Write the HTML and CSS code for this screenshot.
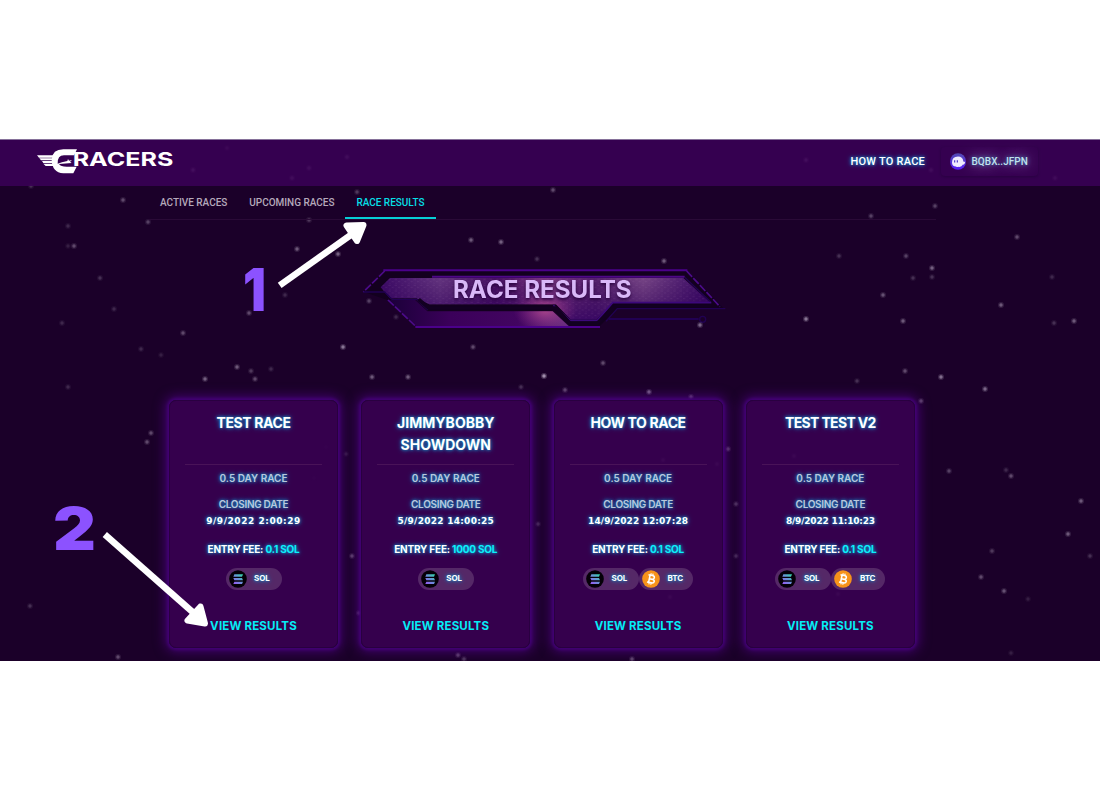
FILE: index.html
```
<!DOCTYPE html>
<html lang="en">
<head>
<meta charset="utf-8">
<title>CRacers - Race Results</title>
<link rel="stylesheet" href="styles.css">
</head>
<body>
<svg class="defs" width="0" height="0" aria-hidden="true">
  <defs>
    <linearGradient id="solg" x1="0" y1="1" x2="1" y2="0"><stop offset="0" stop-color="#9b55f5"/><stop offset=".5" stop-color="#6a8fd8"/><stop offset="1" stop-color="#2fd9a6"/></linearGradient>
    <symbol id="sol" viewBox="0 0 54 54">
      <circle cx="27" cy="27" r="26.5" fill="#050008"/>
      <path fill="url(#solg)" d="M16 13H42L39 20H13ZM13 24H39L42 31H16ZM16 35H42L39 42H13Z"/>
    </symbol>
    <symbol id="btc" viewBox="0 0 54 54">
      <circle cx="27" cy="27" r="26.5" fill="#f7931a"/>
      <g transform="rotate(12 27 27)" fill="none" stroke="#fff" stroke-width="4.6">
        <path d="M17 16H29Q36 16 36 21.500Q36 27 29 27H22M22 27H30Q38 27 38 32.500Q38 38 30 38H17M22 16V38"/>
        <path stroke-width="3.500" d="M24 10V16M30 10V16M24 38V44M30 38V44"/>
      </g>
    </symbol>
  </defs>
</svg>
<main class="app">
  <svg class="stars" viewBox="0 139 1100 522" aria-hidden="true"><g id="starfield"></g></svg>
  <header class="header">
    <svg class="logo" viewBox="105 50 420 84" role="img" aria-label="CRacers">
      <g fill="#fff">
        <path d="M111 75H166L160 82H117ZM118 84H158L156 90H123ZM126 92H156L158 98H130ZM130 100H160L166 107H137Z"/>
        <path d="M231 57H190Q157 57 155 88Q156 126 190 129H220L230 109H200Q182 109 177 101L215 98L210 94L216 89L207 91L204 86L202 92Q184 95 173 100Q172 75 192 75H222Z"/>
        <text class="logo-word" x="218" y="108" textLength="302" lengthAdjust="spacingAndGlyphs">RACERS</text>
      </g>
    </svg>
    <nav class="header-nav">
      <a class="how">HOW TO RACE</a>
      <div class="wallet">
        <svg viewBox="0 0 48 50" aria-hidden="true"><defs><linearGradient id="ph" x2="0" y2="1"><stop stop-color="#534bb1"/><stop offset="1" stop-color="#551bf9"/></linearGradient></defs>
          <ellipse cx="24" cy="25" rx="24" ry="25" fill="url(#ph)"/>
          <path fill="#f1ecff" d="M6 28Q6 10 24 10Q38 10 40 24Q42 28 45 25Q46 34 38 35Q35 42 26 41Q21 43 18 40Q6 40 6 28Z"/>
          <path stroke="#4b36c9" stroke-width="3.500" d="M14 21V28M22 21V28"/></svg>
        <span>BQBX..JFPN</span>
      </div>
    </nav>
  </header>
  <nav class="tabs">
    <a class="tab">ACTIVE RACES</a>
    <a class="tab">UPCOMING RACES</a>
    <a class="tab tab-active">RACE RESULTS</a>
  </nav>
  <svg class="banner" viewBox="0 0 1170 270">
    <defs>
      <linearGradient id="plate"><stop offset="0" stop-color="#3c0a66"/><stop offset=".18" stop-color="#63347f"/><stop offset=".35" stop-color="#461062"/><stop offset=".5" stop-color="#7a3680"/><stop offset=".65" stop-color="#54206d"/><stop offset=".8" stop-color="#754485"/><stop offset="1" stop-color="#350563"/></linearGradient>
      <linearGradient id="under"><stop offset="0" stop-color="#1a0038"/><stop offset=".35" stop-color="#3b005a"/><stop offset=".72" stop-color="#420560"/><stop offset="1" stop-color="#68307f"/></linearGradient>
      <linearGradient id="shade" x2="0" y2="1"><stop stop-color="#300050" stop-opacity="0"/><stop offset="1" stop-color="#300060" stop-opacity=".75"/></linearGradient>
      <radialGradient id="flare"><stop stop-color="#e0609c" stop-opacity=".6"/><stop offset="1" stop-color="#b23c9a" stop-opacity="0"/></radialGradient>
      <pattern id="grain" width="19" height="17" patternUnits="userSpaceOnUse"><path d="M1 4H8M11 10H17M4 15H7" stroke="#b383bd" stroke-opacity=".17" stroke-width="2"/></pattern>
      <clipPath id="panes"><path d="M120 84H1000L1080 157H790L740 208H662L618 163H238L200 145H120L92 112Z"/></clipPath>
      <clipPath id="both"><path d="M120 84H1000L1080 157H790L740 208H662L618 163H238L200 145H120L92 112ZM110 150H195L232 184H608L656 228H198Z"/></clipPath>
    </defs>
    <path fill="#13001f" d="M104 60H1010L1122 176H800L750 228H660L612 184H232L200 150H112L40 125Z"/>
    <path fill="url(#plate)" d="M120 84H1000L1080 157H790L740 208H662L618 163H238L200 145H120L92 112Z"/>
    <path fill="url(#shade)" d="M120 84H1000L1080 157H790L740 208H662L618 163H238L200 145H120L92 112Z"/>
    <path fill="url(#under)" d="M110 150H195L232 184H608L656 228H198Z"/>
    <path clip-path="url(#panes)" fill="url(#grain)" d="M80 80H1090V215H80Z"/>
    <ellipse clip-path="url(#both)" cx="585" cy="180" rx="95" ry="65" fill="url(#flare)"/>
    <g fill="none" stroke-width="6">
      <path stroke="#4b008b" d="M100 61H1012"/><path stroke="#4e0787" d="M246 80H1004"/>
      <path stroke="#4c0b89" stroke-width="5" stroke-dasharray="24 5" d="M104 63L40 126M1010 63L1110 170M114 150L196 228"/>
      <path stroke="#210052" stroke-width="4" d="M40 126H104L126 148H200L234 180M1004 82L1082 156M1126 176H802L768 214"/>
      <path stroke="#3c087b" stroke-width="5" d="M610 166L660 211H742L788 158H1084"/>
      <path stroke="#120021" stroke-width="11" d="M206 148L236 174H618L660 220H742L794 168H1080"/>
      <path stroke="#4b008b" d="M196 231H750"/><path stroke="#210052" d="M776 207H1046"/><circle cx="1058" cy="208" r="9" stroke="#210052" stroke-width="4"/>
    </g>
    <text class="banner-text" x="309" y="145" textLength="536" lengthAdjust="spacingAndGlyphs">RACE RESULTS</text>
  </svg>
  <section class="cards">
    <article class="card">
      <h2 class="title">TEST RACE</h2>
      <p class="duration">0.5 DAY RACE</p>
      <p class="label">CLOSING DATE</p>
      <p class="date">9/9/2022 2:00:29</p>
      <p class="fee">ENTRY FEE: <b>0.1 SOL</b></p>
      <div class="chips"><span class="chip"><svg><use href="#sol"/></svg><i>SOL</i></span></div>
      <a class="view">VIEW RESULTS</a>
    </article>
    <article class="card">
      <h2 class="title title-long">JIMMYBOBBY<br>SHOWDOWN</h2>
      <p class="duration">0.5 DAY RACE</p>
      <p class="label">CLOSING DATE</p>
      <p class="date date-mid">5/9/2022 14:00:25</p>
      <p class="fee">ENTRY FEE: <b>1000 SOL</b></p>
      <div class="chips"><span class="chip"><svg><use href="#sol"/></svg><i>SOL</i></span></div>
      <a class="view">VIEW RESULTS</a>
    </article>
    <article class="card">
      <h2 class="title">HOW TO RACE</h2>
      <p class="duration">0.5 DAY RACE</p>
      <p class="label">CLOSING DATE</p>
      <p class="date date-snug">14/9/2022 12:07:28</p>
      <p class="fee">ENTRY FEE: <b>0.1 SOL</b></p>
      <div class="chips"><span class="chip"><svg><use href="#sol"/></svg><i>SOL</i></span><span class="chip chip-btc"><svg><use href="#btc"/></svg><i>BTC</i></span></div>
      <a class="view">VIEW RESULTS</a>
    </article>
    <article class="card">
      <h2 class="title title-tight">TEST TEST V2</h2>
      <p class="duration">0.5 DAY RACE</p>
      <p class="label">CLOSING DATE</p>
      <p class="date date-tight">8/9/2022 11:10:23</p>
      <p class="fee">ENTRY FEE: <b>0.1 SOL</b></p>
      <div class="chips"><span class="chip"><svg><use href="#sol"/></svg><i>SOL</i></span><span class="chip chip-btc"><svg><use href="#btc"/></svg><i>BTC</i></span></div>
      <a class="view">VIEW RESULTS</a>
    </article>
  </section>
  <svg class="notes" viewBox="0 139 1100 522">
    <g class="step">
      <text x="243" y="311" textLength="23" lengthAdjust="spacingAndGlyphs">1</text>
      <text x="53" y="550" textLength="43" lengthAdjust="spacingAndGlyphs">2</text>
    </g>
    <g fill="#fff" stroke="#fff" stroke-linejoin="round">
      <path stroke-width="6.500" d="M279.700 285.300L355 232"/><path stroke-width="6" d="M346.500 225.500L363.500 225L357 241Z"/>
      <path stroke-width="6.500" d="M104.800 534.500L196 615"/><path stroke-width="6" d="M187.500 620.500L205 623.500L200.500 606.500Z"/>
    </g>
  </svg>
</main>
<script src="stars.js"></script>
</body>
</html>
```
FILE: styles.css
```
* { box-sizing: border-box; }
body { margin: 0; padding-top: 139px; height: 800px; overflow: hidden; background: #fff; font-family: Inter, "Liberation Sans", sans-serif; }
h2, p { margin: 0; }
.defs { position: absolute; }
.app { position: relative; height: 522px; overflow: hidden; background: #1b0029; border-top: 1px solid #86719a; display: flex; flex-direction: column; }
.stars, .notes { position: absolute; left: 0; top: -1px; width: 1100px; height: 522px; pointer-events: none; }
.notes { z-index: 3; }
.header { flex: none; height: 45.5px; background: rgba(57, 0, 84, .9); display: flex; align-items: flex-start; justify-content: space-between; padding: 7px 62px 0 35px; position: relative; }
.logo { width: 140px; height: 28px; }
.logo-word { font: 700 57px Inter, sans-serif; }
.header-nav { display: flex; align-items: center; font-family: Roboto, sans-serif; font-weight: 500; }
.how { font-size: 11px; letter-spacing: .23px; color: #fff; text-shadow: 0 0 5px #1690d0, 0 0 3px #1690d0; margin-right: 16px; line-height: 29px; }
.wallet { display: flex; align-items: center; gap: 5.5px; width: 97px; height: 29px; padding-left: 9px; border-radius: 4px; color: #bfe2ee; font-size: 10px; letter-spacing: .05px; box-shadow: 0 1px 3px rgba(20, 0, 40, .4); text-shadow: 0 0 4px #4585ba, 0 0 14px #b79ad8; }
.wallet svg { width: 16px; height: 17px; flex: none; }
.tabs { position: relative; flex: none; display: flex; width: 787px; height: 34px; margin-left: 149px; border-bottom: 1px solid #2a0a37; }
.tab { height: 33.5px; padding: 0 11px; font: 500 10px/34px Roboto, sans-serif; letter-spacing: -.02px; color: #b5a9bb; white-space: nowrap; }
.tab-active { color: #06dfe6; border-bottom: 2px solid #06cfd6; }
.banner { flex: none; width: 390px; height: 90px; margin: 30.5px 0 0 350px; }
.banner-text { font: 700 71px Inter, sans-serif; fill: #d9b8f8; filter: drop-shadow(0 5px 5px #25003c); }
.cards { position: relative; display: grid; grid-template-columns: repeat(4, 169px); gap: 23.3px; margin: 60px 0 0 169px; }
.card { height: 248px; border-radius: 7px; background: rgba(55, 0, 80, .93); border: 1px solid #290040; box-shadow: 0 0 3px 2px #410073, 0 0 12px 4px rgba(72, 0, 120, .85); display: flex; flex-direction: column; align-items: center; padding-top: 11px; color: #fff; white-space: nowrap; text-shadow: 0 0 5px #168bc5, 0 0 3px #168bc5; }
.title { width: 137px; height: 53px; border-bottom: 1px solid #491358; text-align: center; font-size: 14px; line-height: 22px; font-weight: 700; letter-spacing: -.4px; }
.title-long { letter-spacing: .02px; }
.title-tight { letter-spacing: -.65px; }
.duration, .label { font-size: 10px; line-height: 14px; font-weight: 600; color: #b8c8dd; }
.duration { margin-top: 5.5px; }
.label { margin-top: 12px; letter-spacing: -.3px; }
.date { font: 700 9px/14px "DejaVu Sans", sans-serif; letter-spacing: .55px; margin-top: 3px; }
.date-mid { letter-spacing: .27px; }
.date-snug { letter-spacing: .1px; }
.date-tight { letter-spacing: -.18px; }
.fee { font-size: 10px; line-height: 14px; font-weight: 700; margin-top: 14.5px; letter-spacing: -.2px; }
.fee b { font-weight: 700; color: #0cf0fa; }
.chips { display: flex; margin-top: 12px; }
.chip { width: 56px; height: 22px; border-radius: 11px; background: #552867; display: flex; align-items: center; padding-left: 3px; gap: 7.5px; }
.chip-btc { width: 54px; }
.chip svg { width: 18px; height: 18px; }
.chip i { font-style: normal; font-weight: 700; font-size: 8px; letter-spacing: -.1px; line-height: 12px; margin-bottom: 2px; }
.view { margin-top: 28px; font-size: 11.5px; line-height: 16px; font-weight: 700; letter-spacing: .18px; color: #04edf5; text-shadow: none; }
.step { font: 900 59px Inter, sans-serif; fill: #8c52ff; }
```
FILE: stars.js
```
// Each entry is [x, y, brightness].
const stars = [
  [123,200,.4],[31,186,.25],[68,246,.15],[74,246,.4],[100,278,.25],[114,309,.2],[62,323,.2],[183,333,.4],[141,349,.2],[161,355,.15],[237,367,.5],[251,371,.3],[205,379,.55],[255,379,.4],[271,369,.2],[343,347,.7],[249,313,.4],[285,295,.2],[297,249,.5],[338,254,.55],[148,222,.35],[309,220,.3],[357,192,.3],[151,433,.4],[147,442,.4],[68,387,.2],[68,226,.2],[471,240,.5],[501,242,.55],[537,259,.25],[369,301,.35],[396,317,.2],[473,347,.4],[372,377,.5],[408,377,.5],[544,376,.9],[521,387,.25],[346,454,.15],[352,556,.4],[30,606,.25],[118,657,.4],[359,613,.4],[458,655,.4],[464,659,.3],[326,447,.15],[314,478,.15],[538,524,.25],
  [553,190,.4],[871,216,.35],[935,206,.35],[1017,237,.4],[839,256,.25],[906,256,.35],[932,268,.55],[913,278,.25],[932,277,.25],[883,295,.45],[1001,305,.5],[1052,277,.2],[806,319,.7],[903,321,.5],[1054,323,.25],[1074,321,.5],[664,261,.5],[700,325,.6],[603,363,.4],[565,390,.4],[649,392,.6],[691,397,.5],[905,371,.4],[941,377,.65],[985,389,.6],[857,381,.25],[921,401,.4],[728,449,.4],[717,464,.5],[736,504,.3],[736,556,.25],[949,471,.35],[1011,476,.4],[1006,470,.2],[1081,501,.5],[1068,534,.5],[1090,556,.25],[992,551,.3],[981,577,.4],[1004,591,.45],[1028,599,.15],[1011,653,.15],[632,659,.4],[670,597,.5],[838,594,.5],[663,460,.5],[794,456,.5],
  [193,170,.8],[309,168,.7],[347,157,.7],[292,178,.7],[227,148,.4],[806,160,.8],[931,170,.7],[1055,178,.6]
];
document.getElementById("starfield").innerHTML = stars.map(([x, y, a]) =>
  `<circle cx="${x}" cy="${y}" r="3" fill="#a797b2" opacity="${a * .35}"/><circle cx="${x}" cy="${y}" r="1.7" fill="#c3b2cd" opacity="${a * .8}"/>`).join("");
```
